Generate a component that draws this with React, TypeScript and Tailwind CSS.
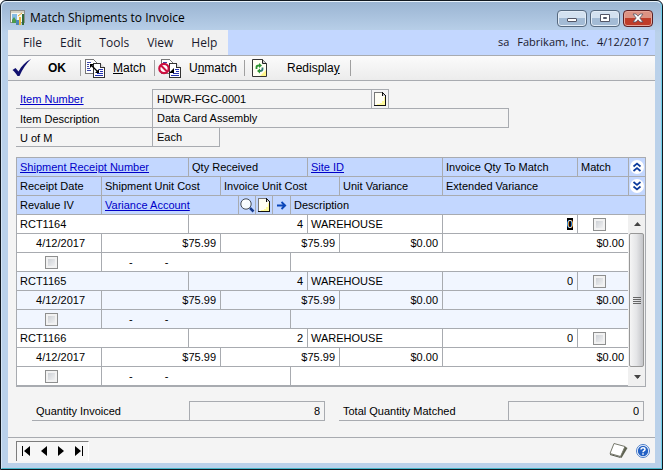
import React from "react";

const records = [
  { receipt: "RCT1164", qty: "4", active: true },
  { receipt: "RCT1165", qty: "4", active: false },
  { receipt: "RCT1166", qty: "2", active: false },
];

const columns = [
  "w-[85px]",
  "w-[87px]",
  "w-8",
  "w-[18px]",
  "w-[17px]",
  "w-[17px]",
  "w-[18px]",
  "w-[17px]",
  "w-8",
  "w-[103px]",
  "",
  "w-[51px]",
  "w-[17px]",
];

const cell = "h-[19px] border-b border-l border-[#a8abb0] p-0 leading-4 font-normal";
const headCell = cell + " bg-[#c3d7ff] pl-[3px] text-left";
const link = "text-[#0000c8] underline";
const fieldLabel = "w-[136px] border-b border-[#a8abb0] pt-0.5 pl-1 leading-4";

function NoteIcon() {
  return (
    <svg width="12" height="14" viewBox="0 0 12 14" shapeRendering="crispEdges" aria-hidden="true">
      <path d="M0 0H9V1H10V2H11V3H12V14H0Z" fill="#111" />
      <path d="M1 1H8V4H11V13H1Z" fill="#fffef4" />
      <path d="M0 0H8V1H1V13H0Z" fill="#777" />
      <path d="M10 5h1v8H3v-1h3v-1h2V9h2Z" fill="#fffa9c" />
      <path d="M9 2h1v1h1v1H9Z" fill="#ccc" />
    </svg>
  );
}

function AppIcon() {
  return (
    <svg width="16" height="16" viewBox="0 0 16 16" aria-hidden="true">
      <rect x="0.5" y="0.5" width="14" height="12" fill="#f4f6f2" stroke="#8d8f8c" />
      <rect x="1" y="1" width="13" height="2" fill="#d5d2c4" />
      <rect x="2" y="4" width="5" height="6" fill="#86bce6" />
      <path d="M2 10 4 7 6 10v3H2z" fill="#4d9b4b" />
      <path d="M6 10h3v5H6z" fill="#4c86b8" />
      <path d="M9 7h2v8H9z" fill="#e9b93c" />
      <path d="M12 4h2v11h-2z" fill="#2f6b3c" />
      <path d="M8 6 12 3" fill="none" stroke="#e0a52c" />
    </svg>
  );
}

function CheckIcon() {
  return (
    <svg width="20" height="18" viewBox="0 0 20 18" aria-hidden="true">
      <path d="M0.5 11 3.5 9 6.5 12.5C9.500 7 13.500 2.500 19 0 14.500 4.500 10.500 10 7.500 17H5.500C4 14.500 2.500 12.500 0.500 11Z" fill="#10106e" />
    </svg>
  );
}

function Pages() {
  return (
    <g shapeRendering="crispEdges">
      <path d="M0.500 0.500H8.500L11.500 3.500V14.500H0.500Z" fill="#fff" stroke="#777" />
      <path d="M2 3.500h4M2 5.500h2M2 7.500h2M2 9.500h3M2 11.500h4" stroke="#3c46a8" />
      <path d="M8.500 4.500H15.500L19.500 8.500V18.500H8.500Z" fill="#fff" stroke="#333" />
      <path d="M15.500 4.500V8.500H19.500" fill="#ddd" stroke="#333" />
      <path d="M14 10.500h4M15 12.500h3M12 14.500h6M10 16.500h8" stroke="#2433b0" />
    </g>
  );
}

function MatchIcon() {
  return (
    <svg width="20" height="19" viewBox="0 0 20 19" aria-hidden="true">
      <Pages />
      <path d="M6 6 13 13" stroke="#000" strokeWidth="1.300" />
      <path d="M5 5h4L5 9ZM14 14v-4L10 14Z" fill="#000" />
    </svg>
  );
}

function UnmatchIcon() {
  return (
    <svg width="23" height="19" viewBox="0 0 23 19" aria-hidden="true">
      <g transform="translate(3 0)">
        <Pages />
        <path d="M13 14V9L8 14Z" fill="#000" />
      </g>
      <circle cx="6" cy="9.500" r="4.700" fill="#fff" stroke="#cc1040" strokeWidth="2.200" />
      <path d="M3 6.500 9 12.500" stroke="#cc1040" strokeWidth="2" />
    </svg>
  );
}

function RefreshIcon() {
  return (
    <svg width="15" height="18" viewBox="0 0 15 18" aria-hidden="true">
      <path d="M0.500 0.500H10.500L14.500 4.500V17.500H0.500Z" fill="#fffff4" stroke="#333" />
      <path d="M10.500 0.500V4.500H14.500" fill="#ccc" stroke="#222" />
      <path d="M8 17 14 11V17Z" fill="#fff68a" />
      <path d="M4.500 10V8Q4.500 6.500 7 6.500" fill="none" stroke="#2c9432" strokeWidth="1.800" />
      <path d="M7 4 10 6.500 7 9Z" fill="#2c9432" />
      <path d="M10.500 8.500V10Q10.500 12 8 12" fill="none" stroke="#2c7a72" strokeWidth="1.800" />
      <path d="M8 9.500 5 12 8 14.500Z" fill="#2c9432" />
    </svg>
  );
}

function MagnifierIcon() {
  return (
    <svg width="15" height="15" viewBox="0 0 15 15" aria-hidden="true">
      <circle cx="6" cy="6" r="5.200" fill="#f6fbff" stroke="#444b55" />
      <path d="M3 5Q4 3 6 3" fill="none" stroke="#fff" strokeWidth="1.500" />
      <path d="M10 10 13.500 13.500" stroke="#173a8c" strokeWidth="2.500" />
    </svg>
  );
}

function ArrowIcon() {
  return (
    <svg width="10" height="9" viewBox="0 0 10 9" aria-hidden="true">
      <path d="M0 4.500H8M4.500 1 8.200 4.500 4.500 8" fill="none" stroke="#0a46b8" strokeWidth="1.800" />
    </svg>
  );
}

function Chevrons({ down }: { down?: boolean }) {
  return (
    <svg width="14" height="14" viewBox="0 0 14 14" aria-hidden="true">
      <circle cx="7" cy="7" r="7" fill="#fff" />
      <path
        d={down ? "M3.500 3 7 6 10.500 3M3.500 7.500 7 10.500 10.500 7.500" : "M3.500 6.500 7 3.500 10.500 6.500M3.500 11 7 8 10.500 11"}
        fill="none"
        stroke="#0b3a9c"
        strokeWidth="1.700"
      />
    </svg>
  );
}

function Tick({ label }: { label: string }) {
  return (
    <input
      type="checkbox"
      aria-label={label}
      className="block size-[13px] appearance-none border border-[#8e8f8f] bg-linear-to-br from-[#c4c8ce] to-[#fafafa] shadow-[inset_0_0_0_2px_#f2f2f2]"
    />
  );
}

function Divider() {
  return <span className="h-4 w-px bg-[#a0a0a0]" />;
}

function Total({ id, label, value }: { id: string; label: string; value: string }) {
  return (
    <div className="flex h-5">
      <label htmlFor={id} className="flex-1 border-b border-[#a8abb0] pt-0.5 pl-1 leading-4">
        {label}
      </label>
      <input
        id={id}
        readOnly
        value={value}
        className="w-[136px] border border-[#a8abb0] bg-transparent pr-1 text-right outline-none"
      />
    </div>
  );
}

export default function App() {
  return (
    <div className="flex min-h-screen flex-col rounded-t-md border border-[#111820] bg-[#bad1ea] bg-linear-to-b from-[#9ab4d2] to-[#bad1ea] to-[32px] font-['Liberation_Sans',Arial,sans-serif] text-[11px] text-black">
      <div className="flex flex-1 flex-col rounded-t-md border border-t-[#e8f2fb] border-r-[#6fd0ea] border-b-[#45b5c8] border-l-[#d5e5f5] px-1.5 pb-[5px]">
        <header className="flex h-7 items-center font-['Open_Sans','Noto_Sans',sans-serif] text-xs">
          <span className="flex items-center gap-1 pt-1 pl-0.5">
            <AppIcon />
            <h1 className="leading-4">Match Shipments to Invoice</h1>
          </span>
          <div className="ml-auto flex gap-[3px] pt-1 pr-0.5">
            <button
              aria-label="Minimize"
              className="flex h-[17px] w-[30px] items-center justify-center rounded-sm border border-[#56697f] bg-linear-to-b from-[#d3e1f0] from-50% to-[#a3bbd5] to-50% shadow-[inset_0_0_0_1px_#e2ecf7]"
            >
              <svg width="12" height="12" viewBox="0 0 12 12"><rect x="1.500" y="6.500" width="9" height="3" rx="0.500" fill="#fff" stroke="#535666" /></svg>
            </button>
            <button
              aria-label="Maximize"
              className="flex h-[17px] w-[30px] items-center justify-center rounded-sm border border-[#56697f] bg-linear-to-b from-[#d3e1f0] from-50% to-[#a3bbd5] to-50% shadow-[inset_0_0_0_1px_#e2ecf7]"
            >
              <svg width="12" height="10" viewBox="0 0 12 10"><path d="M1.500 1.500h9v7h-9ZM4.500 4.500v1h3v-1Z" fill="#fff" fillRule="evenodd" stroke="#535666" /></svg>
            </button>
            <button
              aria-label="Close"
              className="flex h-[17px] w-[30px] items-center justify-center rounded-sm border border-[#5b2125] bg-linear-to-b from-[#dc9283] from-50% to-[#bf3d29] to-50% shadow-[inset_0_0_0_1px_#e6a699]"
            >
              <svg width="12" height="10" viewBox="0 0 12 10"><path d="M1 1H4L6 3.200 8 1H11L7.800 5 11 9H8L6 6.800 4 9H1L4.200 5Z" fill="#fff" stroke="#535666" strokeWidth="0.800" /></svg>
            </button>
          </div>
        </header>

        <main className="flex flex-1 flex-col bg-[#f4f4f4]">
          <nav className="flex h-[26px] items-center border-b border-[#a8abb0] bg-[#c3d7ff] font-['Open_Sans','Noto_Sans',sans-serif] text-xs text-[#1a1a2e]">
            <div className="flex h-full w-[220px] items-center gap-[18px] bg-[#f1f1f1] pl-[15px]">
              <button>File</button>
              <button>Edit</button>
              <button>Tools</button>
              <button>View</button>
              <button>Help</button>
            </div>
            <p className="ml-auto flex gap-2 pr-1.5 text-[11px]">
              <span>sa</span>
              <span>Fabrikam, Inc.</span>
              <span>4/12/2017</span>
            </p>
          </nav>

          <div role="toolbar" className="flex h-[25px] items-center border-b border-[#a8abb0] bg-linear-to-b from-[#fbfbfb] to-[#ececec] text-xs">
            <button className="flex w-[72px] items-center gap-4 pl-1 font-bold">
              <CheckIcon />
              OK
            </button>
            <Divider />
            <button className="flex w-[73px] items-center gap-2 pl-1">
              <MatchIcon />
              <span><u>M</u>atch</span>
            </button>
            <Divider />
            <button className="flex w-[89px] items-center gap-2 pl-[3px]">
              <UnmatchIcon />
              <span>U<u>n</u>match</span>
            </button>
            <Divider />
            <button className="flex w-[105px] items-center gap-5 pl-[7px]">
              <RefreshIcon />
              <span>Redispla<u>y</u></span>
            </button>
            <Divider />
          </div>

          <section className="px-2 pt-2">
            <div className="flex h-5">
              <label htmlFor="item-number" className={fieldLabel}>
                <a href="#item" className={link}>Item Number</a>
              </label>
              <input id="item-number" readOnly value="HDWR-FGC-0001" className="w-[220px] border border-[#a8abb0] bg-transparent pl-1 outline-none" />
              <button aria-label="Item note" className="flex w-[17px] items-center justify-center border border-l-0 border-[#a8abb0]">
                <NoteIcon />
              </button>
            </div>
            <div className="flex h-[19px]">
              <label htmlFor="item-description" className={fieldLabel}>Item Description</label>
              <input id="item-description" readOnly value="Data Card Assembly" className="-mt-px w-[357px] border border-[#a8abb0] bg-transparent pl-1 outline-none" />
            </div>
            <div className="flex h-[19px]">
              <label htmlFor="unit" className={fieldLabel}>U of M</label>
              <input id="unit" readOnly value="Each" className="w-[68px] border border-t-0 border-[#a8abb0] bg-transparent pl-1 outline-none" />
            </div>
          </section>

          <section className="pt-2.5 pr-[9px] pl-2">
            <table className="w-full table-fixed border-separate border-spacing-0 border-t border-r border-b border-[#a8abb0]">
              <colgroup>
                {columns.map((width, i) => (
                  <col key={i} className={width} />
                ))}
              </colgroup>
              <thead>
                <tr>
                  <th colSpan={2} className={headCell}><a href="#receipt" className={link}>Shipment Receipt Number</a></th>
                  <th colSpan={6} className={headCell}>Qty Received</th>
                  <th colSpan={2} className={headCell}><a href="#site" className={link}>Site ID</a></th>
                  <th className={headCell}>Invoice Qty To Match</th>
                  <th className={headCell}>Match</th>
                  <th className={cell + " bg-[#c3d7ff]"}>
                    <button aria-label="Hide details" className="flex w-full justify-center"><Chevrons /></button>
                  </th>
                </tr>
                <tr>
                  <th className={headCell}>Receipt Date</th>
                  <th colSpan={2} className={headCell}>Shipment Unit Cost</th>
                  <th colSpan={6} className={headCell}>Invoice Unit Cost</th>
                  <th className={headCell}>Unit Variance</th>
                  <th colSpan={2} className={headCell}>Extended Variance</th>
                  <th className={cell + " bg-[#c3d7ff]"}>
                    <button aria-label="Show details" className="flex w-full justify-center"><Chevrons down /></button>
                  </th>
                </tr>
                <tr>
                  <th className={headCell}>Revalue IV</th>
                  <th colSpan={3} className={headCell}><a href="#account" className={link}>Variance Account</a></th>
                  <th className={cell + " bg-[#c3d7ff]"}>
                    <button aria-label="Look up account" className="flex w-full justify-center"><MagnifierIcon /></button>
                  </th>
                  <th className={cell + " bg-[#c3d7ff]"}>
                    <button aria-label="Account note" className="flex w-full justify-center"><NoteIcon /></button>
                  </th>
                  <th className={cell + " bg-[#c3d7ff]"}>
                    <button aria-label="Open account" className="flex w-full justify-center"><ArrowIcon /></button>
                  </th>
                  <th colSpan={6} className={headCell}>Description</th>
                </tr>
              </thead>
              <tbody>
                {records.map((r, i) => {
                  const tint = i % 2 ? " bg-[#f1f6ff]" : " bg-white";
                  const text = cell + tint + " pl-[3px]";
                  const num = cell + tint + " pr-1 text-right";
                  return (
                    <React.Fragment key={r.receipt}>
                      <tr>
                        <td colSpan={2} className={text}>{r.receipt}</td>
                        <td colSpan={6} className={num}>{r.qty}</td>
                        <td colSpan={2} className={text}>WAREHOUSE</td>
                        <td className={num}>
                          <input
                            aria-label={"Invoice quantity to match for " + r.receipt}
                            defaultValue="0"
                            className={
                              r.active
                                ? "ml-auto block h-3 w-1.5 bg-black text-right leading-3 text-white outline-none"
                                : "ml-auto block h-4 w-full bg-transparent text-right outline-none"
                            }
                          />
                        </td>
                        <td className={cell + tint + " pl-[15px]"}><Tick label={"Match " + r.receipt} /></td>
                        {i === 0 && (
                          <td rowSpan={9} className="bg-[#f0f0f0] p-0 pl-px">
                            <div className="flex h-[171px] flex-col">
                              <button aria-label="Scroll up" className="flex h-[18px] items-center justify-center">
                                <svg width="7" height="4" viewBox="0 0 7 4"><path d="M0 4 3.500 0 7 4Z" fill="#444" /></svg>
                              </button>
                              <button
                                aria-label="Scroll thumb"
                                className="mr-px flex flex-1 flex-col items-center justify-center gap-px rounded-xs border border-[#979797] bg-linear-to-r from-[#f5f5f5] via-[#e4e5e7] to-[#c4c5c9]"
                              >
                                <span className="h-px w-2 bg-[#666]" />
                                <span className="h-px w-2 bg-[#666]" />
                                <span className="h-px w-2 bg-[#666]" />
                                <span className="h-px w-2 bg-[#666]" />
                              </button>
                              <button aria-label="Scroll down" className="flex h-[19px] items-center justify-center">
                                <svg width="7" height="4" viewBox="0 0 7 4"><path d="M0 0H7L3.500 4Z" fill="#444" /></svg>
                              </button>
                            </div>
                          </td>
                        )}
                      </tr>
                      <tr>
                        <td className={cell + tint + " pr-4 text-right"}>4/12/2017</td>
                        <td colSpan={2} className={num}>$75.99</td>
                        <td colSpan={6} className={num}>$75.99</td>
                        <td className={num}>$0.00</td>
                        <td colSpan={2} className={num}>$0.00</td>
                      </tr>
                      <tr>
                        <td className={cell + tint + " pl-7"}><Tick label={"Revalue " + r.receipt} /></td>
                        <td colSpan={6} className={cell + tint}>
                          <span className="flex gap-8 pl-[27px]"><span>-</span><span>-</span></span>
                        </td>
                        <td colSpan={5} className={cell + tint} />
                      </tr>
                    </React.Fragment>
                  );
                })}
              </tbody>
            </table>
          </section>

          <section className="grid grid-cols-[293fr_305fr] gap-3.5 pt-3.5 pr-[11px] pb-[15px] pl-6">
            <Total id="qty-invoiced" label="Quantity Invoiced" value="8" />
            <Total id="qty-matched" label="Total Quantity Matched" value="0" />
          </section>

          <footer className="mt-auto flex h-[26px] items-center border-t border-[#a8abb0] pr-[5px] pl-2">
            <div className="flex h-5 w-[73px] items-center justify-between border-t border-l border-[#7d7d7d] border-r border-r-white bg-[#f7f7f7] px-1">
              <button aria-label="First record"><svg width="10" height="10" viewBox="0 0 10 10"><path d="M1 0H2V10H1ZM9 0V10L3 5Z" /></svg></button>
              <button aria-label="Previous record"><svg width="6" height="10" viewBox="0 0 6 10"><path d="M6 0V10L0 5Z" /></svg></button>
              <button aria-label="Next record"><svg width="6" height="10" viewBox="0 0 6 10"><path d="M0 0V10L6 5Z" /></svg></button>
              <button aria-label="Last record"><svg width="10" height="10" viewBox="0 0 10 10"><path d="M1 0 7 5 1 10ZM8 0H9V10H8Z" /></svg></button>
            </div>
            <div className="ml-auto flex items-center gap-2">
              <button aria-label="Window note">
                <svg width="19" height="17" viewBox="0 0 19 17">
                  <path d="M15 4 18.500 6 12.500 16 10 14Z" fill="#5d6150" />
                  <path d="M5 1.500 16 4.500 11.500 14.500 1 11.500Z" fill="#fff" stroke="#77796c" />
                  <path d="M1 12.500 11.500 15.500" stroke="#55584c" />
                </svg>
              </button>
              <button aria-label="Help">
                <svg width="14" height="14" viewBox="0 0 14 14">
                  <circle cx="7" cy="7" r="6.500" fill="#fff" stroke="#4a7cc8" />
                  <circle cx="7" cy="7" r="5.200" fill="#2361c4" />
                  <path d="M5 5.500Q5 3.800 7 3.800T9 5.500C9 6.700 7 6.600 7 8.300M7 9.300V10.800" fill="none" stroke="#fff" strokeWidth="1.500" />
                </svg>
              </button>
            </div>
          </footer>
        </main>
      </div>
    </div>
  );
}
